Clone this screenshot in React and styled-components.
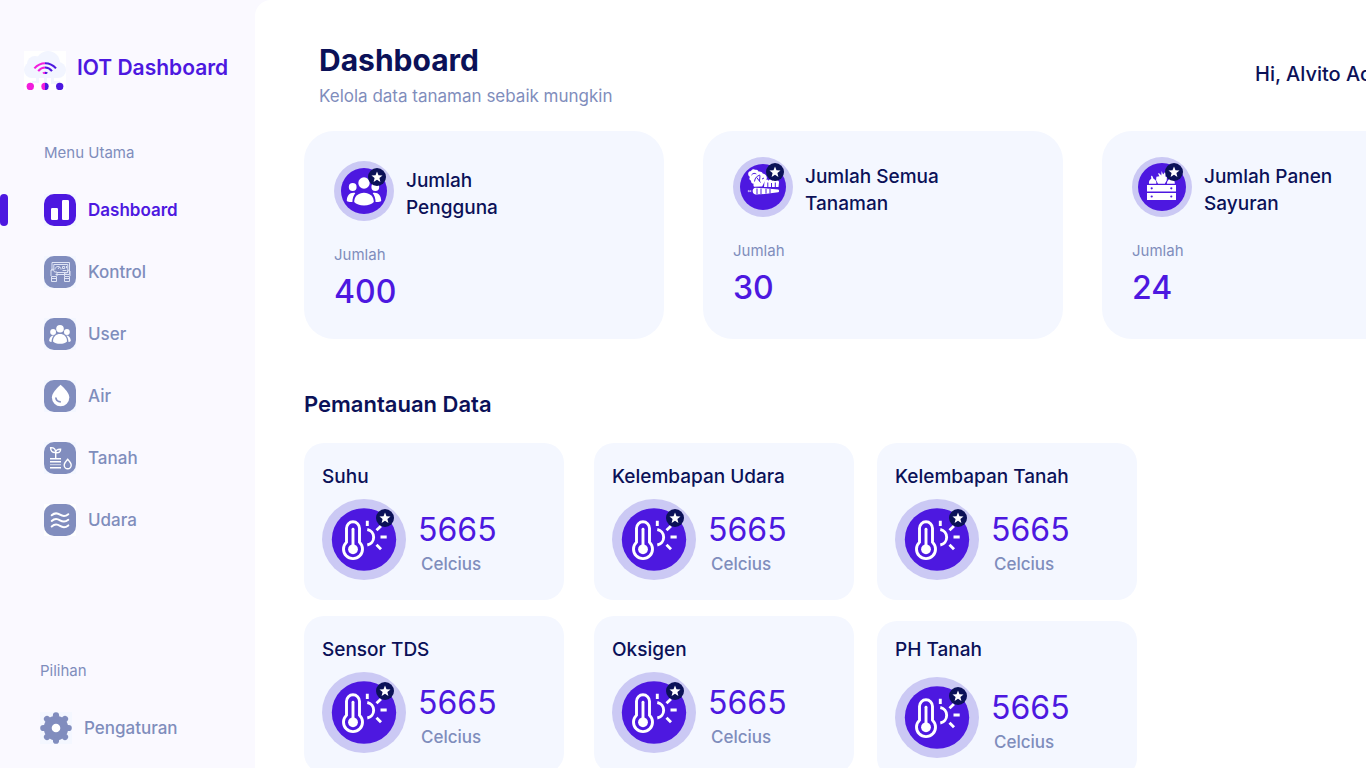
import React from "react";
import styled, { createGlobalStyle, ThemeProvider } from "styled-components";

const theme = {
  primary: "#4d18e0",
  navy: "#0b1158",
  muted: "#7f8dbc",
  tile: "#818dbe",
  card: "#f4f7ff",
  ring: "#cbc9f4",
  page: "#faf9ff",
};

const GlobalStyle = createGlobalStyle`
  *, *::before, *::after { box-sizing: border-box; }
  html { scrollbar-width: none; }
  body {
    margin: 0;
    overflow-x: hidden;
    background: ${theme.page};
    font-family: Inter, "Liberation Sans", sans-serif;
    -webkit-font-smoothing: antialiased;
  }
  h1, h2, h3, p, ul { margin: 0; padding: 0; }
  svg { display: block; }
`;

const Shell = styled.div`
  display: flex;
  min-height: 100vh;
`;

const Sidebar = styled.aside`
  flex: 0 0 255px;
  padding: 51px 0 24px;
`;

const Brand = styled.div`
  display: flex;
  align-items: center;
  gap: 11px;
  height: 39px;
  padding-left: 24px;
`;

const BrandName = styled.span`
  padding-bottom: 5px;
  color: ${({ theme }) => theme.primary};
  font-size: 21px;
  font-weight: 600;
  line-height: 28px;
  white-space: nowrap;
`;

const MenuLabel = styled.p`
  margin-top: ${({ $gap }) => $gap}px;
  padding-left: ${({ $indent }) => $indent}px;
  color: ${({ theme }) => theme.muted};
  font-size: 15px;
  line-height: 20px;
`;

const NavList = styled.ul`
  display: flex;
  flex-direction: column;
  gap: 30px;
  margin-top: 31px;
  list-style: none;
`;

const NavLink = styled.a`
  display: flex;
  align-items: center;
  height: 32px;
  color: ${({ theme, $active }) => ($active ? theme.primary : theme.muted)};
  font-size: 17px;
  font-weight: ${({ $active }) => ($active ? 600 : 500)};
  text-decoration: none;

  &::before {
    content: "";
    width: 8px;
    height: 32px;
    margin-right: ${({ $indent }) => $indent - 8}px;
    border-radius: 4px;
    background: ${({ theme, $active }) => ($active ? theme.primary : "transparent")};
  }
`;

const IconBox = styled.span`
  width: 32px;
  height: 32px;
  margin-right: 12px;
  background: ${({ theme, $back }) => $back || theme.card};
`;

const Tile = styled.span`
  display: block;
  width: 32px;
  height: 32px;
  border-radius: 10px;
  background: ${({ theme, $active }) => ($active ? theme.primary : theme.tile)};
`;

const Main = styled.main`
  flex: 1;
  min-width: 0;
  overflow: hidden;
  padding: 42px 0 60px 49px;
  border-radius: 16px 0 0 16px;
  background: #fff;
`;

const Header = styled.header`
  display: flex;
  align-items: center;
  justify-content: space-between;
  min-width: 1158px;
  padding-left: 15px;
`;

const PageTitle = styled.h1`
  color: ${({ theme }) => theme.navy};
  font-size: 30px;
  font-weight: 700;
  line-height: 36px;
`;

const Subtitle = styled.p`
  margin-top: 8px;
  color: ${({ theme }) => theme.muted};
  font-size: 17px;
  line-height: 20px;
`;

const Greeting = styled.p`
  flex: 0 0 207px;
  color: ${({ theme }) => theme.navy};
  font-size: 20px;
  font-weight: 500;
  line-height: 28px;
  white-space: nowrap;
`;

const StatRow = styled.section`
  display: flex;
  gap: 39px;
  margin-top: 25px;
`;

const StatCard = styled.article`
  flex: 0 0 360px;
  min-height: 208px;
  padding: ${({ $compact }) => ($compact ? 26 : 30)}px 30px 24px;
  border-radius: 30px;
  background: ${({ theme }) => theme.card};
`;

const StatHead = styled.div`
  display: flex;
  align-items: flex-end;
  gap: 12px;
`;

const StatTitle = styled.h3`
  max-width: 150px;
  color: ${({ theme }) => theme.navy};
  font-size: 19px;
  font-weight: 500;
  line-height: 27px;
`;

const StatCaption = styled.p`
  margin-top: 24px;
  color: ${({ theme }) => theme.muted};
  font-size: 15px;
  line-height: 20px;
`;

const Value = styled.p`
  color: ${({ theme }) => theme.primary};
  font-size: 32px;
  font-weight: 500;
  line-height: 40px;
`;

const StatValue = styled(Value)`
  margin-top: 7px;
`;

const SectionTitle = styled.h2`
  margin-top: 51px;
  color: ${({ theme }) => theme.navy};
  font-size: 22px;
  font-weight: 600;
  line-height: 28px;
`;

const SensorColumns = styled.section`
  display: flex;
  margin-top: 25px;
`;

const SensorColumn = styled.div`
  display: flex;
  flex: 0 0 260px;
  flex-direction: column;
  gap: ${({ $gap }) => $gap}px;
  margin-right: ${({ $after }) => $after}px;
`;

const SensorCard = styled.article`
  padding: ${({ $raised }) => ($raised ? 17 : 22)}px 18px 20px;
  border-radius: 20px;
  background: ${({ theme }) => theme.card};
`;

const SensorTitle = styled.h3`
  margin-bottom: ${({ $raised }) => ($raised ? 15 : 10)}px;
  color: ${({ theme }) => theme.navy};
  font-size: 19px;
  font-weight: 500;
  line-height: 24px;
`;

const SensorBody = styled.div`
  display: flex;
  gap: 12px;
`;

const Reading = styled.div`
  padding-top: 11px;
`;

const SensorValue = styled(Value)`
  font-weight: 400;
`;

const Unit = styled.p`
  margin-top: 2px;
  padding-left: 3px;
  color: ${({ theme }) => theme.muted};
  font-size: 17px;
  font-weight: 500;
  line-height: 24px;
`;

const Logo = () => (
  <svg width="42" height="39" viewBox="0 0 42 39" aria-hidden="true">
    <defs>
      <linearGradient id="split" gradientUnits="userSpaceOnUse" x1="0" x2="42" y1="0" y2="0">
        <stop offset="0.5" stopColor="#f21ddc" />
        <stop offset="0.5" stopColor="#4d18e0" />
      </linearGradient>
    </defs>
    <path fill="#fff" d="M0 0h42v39H0z" />
    <g fill="#f2f5ff">
      <circle cx="24" cy="12" r="12" />
      <circle cx="11" cy="13" r="8" />
      <circle cx="8" cy="19" r="8" />
      <circle cx="34" cy="19" r="8" />
      <path d="M8 14h26v13H8z" />
      <path d="M12 27h3v5H8v-2h4zM20 27h3v6h-3zM27 27h3v3h6v3h-9z" />
    </g>
    <g fill="none" stroke="url(#split)" strokeWidth="2.1">
      <path d="M10.400 17.400C16.400 10.500 26 10.500 32 17.400" />
      <path d="M14.200 20.100c4-4.900 9.800-4.900 13.800 0" />
    </g>
    <path fill="url(#split)" d="M18.300 21.800c1.700-1.500 4-1.500 5.700 0l-1.500 1.300h-2.800z" />
    <circle cx="6.300" cy="35.500" r="3.700" fill="#f21ddc" />
    <circle cx="21" cy="35.500" r="3.700" fill="url(#split)" />
    <circle cx="35.700" cy="35.500" r="3.700" fill="#4d18e0" />
  </svg>
);

const NavSvg = ({ children }) => (
  <svg width="32" height="32" viewBox="0 0 32 32" fill="none" aria-hidden="true">
    {children}
  </svg>
);

const BarsIcon = () => (
  <NavSvg>
    <rect x="7" y="14" width="7" height="12" rx="1.200" fill="#fff" />
    <rect x="18" y="6" width="7" height="20" rx="1.200" fill="#fff" />
  </NavSvg>
);

const ControlIcon = () => (
  <NavSvg>
    <g stroke="#dfe4f5" strokeWidth="1">
      <path d="M8 15V6.500h17.500V18.500H11.500" />
      <path d="M9.800 14V8.500h14v8H13" />
      <path d="M11 13.500c0-4 6-4 6 0M14 13l1.500-2M18.500 10.500h2.200v2h-2.200zM22.500 10v2.200M18.500 14.500h4" />
      <path d="M7 20v-6l2-1 1.500 3h2.500v4M26 20v-5l-1.500-1-2 3h-2v3" />
      <path d="M7.500 20.500h5v5h-5zM20.500 20.500h5v5h-5zM7.500 22.500h5M20.500 22.500h5" />
    </g>
  </NavSvg>
);

const UserIcon = () => (
  <NavSvg>
    <g fill="#fff">
      <circle cx="16" cy="10.700" r="3.800" />
      <circle cx="9.100" cy="14" r="2.900" />
      <circle cx="22.900" cy="14" r="2.900" />
      <path d="M9 23.500C9 18.500 12 15.900 16 15.900s7 2.600 7 7.600c-1.400 1.500-4 2.300-7 2.300s-5.600-.8-7-2.300z" />
      <path d="M9.800 17.500C6.800 17.500 5.200 20 5.200 23c.5.600 1.200.9 2.300 1 .1-2.700.9-4.800 2.300-6.500zM22.200 17.500c3 0 4.600 2.500 4.600 5.500-.5.600-1.200.9-2.300 1-.1-2.700-.9-4.800-2.300-6.500z" />
    </g>
  </NavSvg>
);

const DropIcon = () => (
  <NavSvg>
    <path fill="#fff" d="M16.600 4.800c4.400 4 8.700 8.500 8.700 12.800a8.700 8.700 0 0 1-17.400 0c0-4.300 4.300-8.800 8.700-12.800z" />
    <path stroke="#818dbe" strokeWidth="1.700" d="M11.800 17.500c.3 2.700 2.200 4.300 5 4.400" />
  </NavSvg>
);

const SoilIcon = () => (
  <NavSvg>
    <g stroke="#fff" strokeWidth="1.400">
      <path d="M11.700 16.500v-6M6.600 5.700c3.200-.3 5.200 1.300 5.100 4.800-3.300.3-5.100-1.300-5.100-4.800zM16.600 7.200c-3.200-.2-5 1-4.900 3.600 3.300.2 5-.8 4.900-3.600z" />
      <path d="M6 16.700h11M6 19.700h11M6 25.700h11" />
      <path d="M23.700 17.300c2 2.200 3.500 4 3.500 5.900a3.500 3.500 0 0 1-7 0c0-1.900 1.500-3.700 3.500-5.900z" />
    </g>
    <path stroke="#fff" strokeOpacity="0.700" d="M6 22.700h11" />
  </NavSvg>
);

const WindIcon = () => (
  <NavSvg>
    <g stroke="#fff" strokeWidth="2" strokeLinecap="round">
      <path d="M7.700 11.300c2.600-2.400 5.600-2.400 8.300-.6 2.800 1.800 5.600 1.800 8.300-.5" />
      <path d="M7.700 16.900c2.600-2.400 5.600-2.400 8.300-.6 2.800 1.800 5.600 1.800 8.300-.5" />
      <path d="M7.700 22.500c2.600-2.400 5.600-2.400 8.300-.6 2.800 1.800 5.600 1.800 8.300-.5" />
    </g>
  </NavSvg>
);

const GearIcon = () => (
  <NavSvg>
    <g fill="#818dbe">
      <circle cx="16" cy="16" r="12.300" />
      {[0, 45, 90, 135, 180, 225, 270, 315].map((angle) => (
        <circle key={angle} cx="16" cy="3.300" r="3.100" transform={`rotate(${angle} 16 16)`} />
      ))}
    </g>
    <circle cx="16" cy="16" r="4.300" fill="#fff" />
  </NavSvg>
);

const StarBadge = ({ x, y }) => (
  <g transform={`translate(${x} ${y})`}>
    <circle r="9" fill="#0b1158" />
    <path fill="#fff" d="M0-5.500l1.500 3.700 4 .3-3.100 2.500 1 3.900L0 2.800l-3.400 2.100 1-3.900-3.100-2.500 4-.3z" />
  </g>
);

const PeopleBadge = () => (
  <svg width="60" height="60" viewBox="0 0 60 60" aria-hidden="true">
    <circle cx="30" cy="30" r="30" fill="#cbc9f4" />
    <circle cx="30" cy="30" r="23" fill="#4d18e0" />
    <g fill="#fff">
      <circle cx="30" cy="22" r="5.700" />
      <circle cx="18.700" cy="26" r="3.900" />
      <circle cx="41.300" cy="26" r="3.900" />
      <path d="M20.200 41c0-5.700 4.300-9.200 9.800-9.200s9.800 3.500 9.800 9.200c-2 2.200-5.500 3.400-9.800 3.400s-7.800-1.200-9.800-3.400z" />
      <path d="M21.300 31.900c-5.200-1.100-8.500 2.400-8.500 8 1.200.9 3 1.300 5.600 1.100 0-3.600 1.200-6.700 2.900-9.100zM38.700 31.900c5.200-1.100 8.500 2.400 8.500 8-1.200.9-3 1.300-5.600 1.100 0-3.600-1.200-6.700-2.900-9.100z" />
    </g>
    <StarBadge x="43" y="16" />
  </svg>
);

const PlantBadge = () => (
  <svg width="60" height="60" viewBox="0 0 60 60" aria-hidden="true">
    <circle cx="30" cy="30" r="30" fill="#cbc9f4" />
    <circle cx="30" cy="30" r="23" fill="#4d18e0" />
    <g fill="#fff">
      <path d="M15.200 16.500c.2-2 1.600-2.400 2.800-2.500.8-1.700 2.800-2.200 4.200-1.200 1.800-.5 3 .3 3.300 1.800 1.800-.4 3.500.4 4.200 1.800 2.600.2 4.300 2.300 4.200 4.900l-3 4.800-1.700 3.400-8.200.2c-.7-1.200-.7-2.100-.3-3-1.900-.2-2.800-1.300-2.600-2.900-1.800-.8-2.200-2.400-1.200-3.900-1.200-.8-1.900-2-1.700-3.400z" />
      <path d="M31.500 24.500c.7-2.300 3.100-2.500 4.100-.7.800-1.900 3.200-1.900 3.900 0 .5-1.300 2.600-1.500 3.100.2 1.200-1.300 3.200-.7 3.400 1.200l-.5 4.800H31z" />
      <path d="M22 30.700l12 .7 11.300 1.100c1 .7 1.200 2.100 0 2.800l-11.600 1.500-11.200.8c-3.700-.9-3.700-6-.5-6.900z" />
      <path d="M14.500 34l1.500-1.300.4 1 1.800-.7v2.200l-1.800-.6-.4 1z" opacity="0.700" />
    </g>
    <g fill="none" stroke="#4d18e0" strokeWidth="1">
      <path d="M18.500 18c1.500-2 3.500-2 4.800-1M21.500 24.500c.5-4 2.500-5.500 5.500-6.500M23.700 20.500l3.800 5M27 18.500l-.5 5.500M29 22l2-1" />
      <path d="M34.800 25.500V30M38.500 26v4M42.300 25.500V30M24 31.500v5.500M28 31.500v5.500M33 31.800v4.800M37 32v4.500" />
    </g>
    <StarBadge x="42" y="15" />
  </svg>
);

const CrateBadge = () => (
  <svg width="60" height="60" viewBox="0 0 60 60" aria-hidden="true">
    <circle cx="30" cy="30" r="30" fill="#cbc9f4" />
    <circle cx="30" cy="30" r="24" fill="#4d18e0" />
    <g fill="#fff">
      <path d="M15 28h29v6.500H15zM15 36h29v7H15z" />
      <path d="M17 26.800c-.5-3 1-4 2.300-5.100l-.2-3 1.200.2 1.200 2.800c1.700.8 3.300 2.200 2.800 5.100z" />
      <path d="M26 26.800l-1.900-3.600.3-3.500 3-.5-1.500-3 1.700.2 1.700 2.200.3-4.700 1.500 3.500 2.200-2.600h1.700l-1.800 4.400 1.700 1-.2 3.400-1.900 3.200z" />
      <path d="M34.800 26.800c.3-3.200 2.300-5 4.500-5s3.700 2 3.500 5z" />
    </g>
    <g fill="#4d18e0">
      <circle cx="19.700" cy="31.300" r="1.100" />
      <circle cx="39.300" cy="31.300" r="1.100" />
      <circle cx="19.700" cy="39.500" r="1.100" />
      <circle cx="39.300" cy="39.500" r="1.100" />
    </g>
    <StarBadge x="42" y="15" />
  </svg>
);

const WeatherBadge = () => (
  <svg width="84" height="81" viewBox="0 0 84 81" aria-hidden="true">
    <ellipse cx="42" cy="40.500" rx="42" ry="40.500" fill="#cbc9f4" />
    <ellipse cx="42" cy="40.500" rx="32.200" ry="31.300" fill="#4d18e0" />
    <g fill="none" stroke="#fff" strokeWidth="2.900">
      <path d="M24.500 43.200V29.300a6.500 6.500 0 0 1 13 0v13.900a9.500 9.500 0 1 1-13 0z" />
      <path strokeLinecap="round" d="M31 30.200V50" />
      <path d="M45.300 30.500a7.900 7.900 0 0 1 0 15.500" />
      <path d="M45.300 21.700V27M54.500 31.200l4.500-4.200M58.500 38h6.200M54.500 45.800l4.500 4.400" />
    </g>
    <circle cx="31" cy="50.300" r="4.900" fill="#fff" />
    <StarBadge x="63" y="19" />
  </svg>
);

const navItems = [
  { label: "Dashboard", icon: BarsIcon, active: true },
  { label: "Kontrol", icon: ControlIcon },
  { label: "User", icon: UserIcon },
  { label: "Air", icon: DropIcon },
  { label: "Tanah", icon: SoilIcon },
  { label: "Udara", icon: WindIcon, back: "#fff" },
];

const stats = [
  { title: "Jumlah Pengguna", value: "400", icon: PeopleBadge },
  { title: "Jumlah Semua Tanaman", value: "30", icon: PlantBadge, compact: true },
  { title: "Jumlah Panen Sayuran", value: "24", icon: CrateBadge, compact: true },
];

const sensorColumns = [
  { gap: 16, after: 30, sensors: [{ title: "Suhu" }, { title: "Sensor TDS" }] },
  { gap: 16, after: 23, sensors: [{ title: "Kelembapan Udara" }, { title: "Oksigen" }] },
  { gap: 21, after: 0, sensors: [{ title: "Kelembapan Tanah" }, { title: "PH Tanah", raised: true }] },
];

export default function App() {
  return (
    <ThemeProvider theme={theme}>
      <GlobalStyle />
      <Shell>
        <Sidebar>
          <Brand>
            <Logo />
            <BrandName>IOT Dashboard</BrandName>
          </Brand>
          <nav>
            <MenuLabel $gap={53} $indent={44}>Menu Utama</MenuLabel>
            <NavList>
              {navItems.map(({ label, icon: Icon, active, back }) => (
                <li key={label}>
                  <NavLink href="#" $active={active} $indent={44}>
                    <IconBox $back={back}>
                      <Tile $active={active}>
                        <Icon />
                      </Tile>
                    </IconBox>
                    {label}
                  </NavLink>
                </li>
              ))}
            </NavList>
            <MenuLabel $gap={125} $indent={40}>Pilihan</MenuLabel>
            <NavList>
              <li>
                <NavLink href="#" $indent={40}>
                  <IconBox>
                    <GearIcon />
                  </IconBox>
                  Pengaturan
                </NavLink>
              </li>
            </NavList>
          </nav>
        </Sidebar>
        <Main>
          <Header>
            <div>
              <PageTitle>Dashboard</PageTitle>
              <Subtitle>Kelola data tanaman sebaik mungkin</Subtitle>
            </div>
            <Greeting>Hi, Alvito Ad</Greeting>
          </Header>
          <StatRow>
            {stats.map(({ title, value, icon: Icon, compact }) => (
              <StatCard key={title} $compact={compact}>
                <StatHead>
                  <Icon />
                  <StatTitle>{title}</StatTitle>
                </StatHead>
                <StatCaption>Jumlah</StatCaption>
                <StatValue>{value}</StatValue>
              </StatCard>
            ))}
          </StatRow>
          <SectionTitle>Pemantauan Data</SectionTitle>
          <SensorColumns>
            {sensorColumns.map(({ gap, after, sensors }) => (
              <SensorColumn key={sensors[0].title} $gap={gap} $after={after}>
                {sensors.map(({ title, raised }) => (
                  <SensorCard key={title} $raised={raised}>
                    <SensorTitle $raised={raised}>{title}</SensorTitle>
                    <SensorBody>
                      <WeatherBadge />
                      <Reading>
                        <SensorValue>5665</SensorValue>
                        <Unit>Celcius</Unit>
                      </Reading>
                    </SensorBody>
                  </SensorCard>
                ))}
              </SensorColumn>
            ))}
          </SensorColumns>
        </Main>
      </Shell>
    </ThemeProvider>
  );
}
